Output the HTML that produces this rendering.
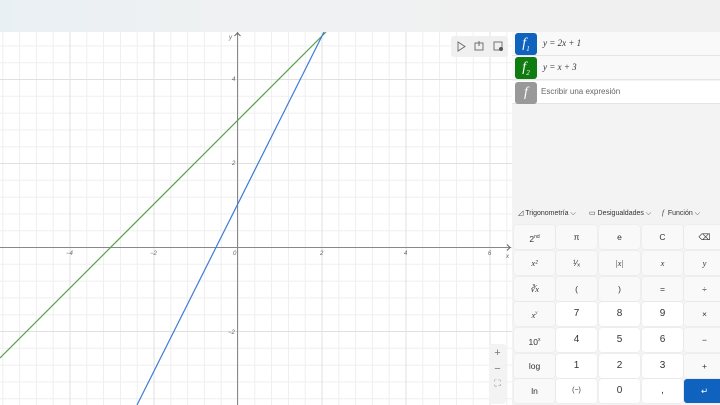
<!DOCTYPE html>
<html><head><meta charset="utf-8"><style>
*{margin:0;padding:0;box-sizing:border-box}
body{width:720px;height:405px;overflow:hidden;background:#f3f3f3;font-family:"Liberation Sans",sans-serif;position:relative}
.top{position:absolute;left:0;top:0;width:720px;height:32px;background:linear-gradient(90deg,#e9f0f4 0%,#eff1f2 30%,#f0f0f0 100%)}
svg.g{position:absolute;left:0;top:32px}
.panel{position:absolute;left:512px;top:32px;width:208px;height:373px;background:#f3f3f3}
.row{position:absolute;left:0;width:208px;height:24px;background:#f9f9f9;border-bottom:1px solid #e5e5e5}
.ic{position:absolute;left:3px;top:1px;width:22px;height:22px;border-radius:3px;color:#fff;font-family:"Liberation Serif",serif;font-style:italic;font-size:14px;text-align:center;line-height:22px}
.ic sub{font-size:7px}
.eq{position:absolute;left:31px;top:6px;font-family:"Liberation Serif",serif;font-style:italic;font-size:9px;color:#333}
.tb{position:absolute;top:209px;font-size:7px;color:#333}
.k{position:absolute;width:41px;height:24px;border-radius:3px;background:#f9f9f9;font-size:8.5px;color:#333;text-align:center;line-height:24px;box-shadow:0 0 0 .5px #e9e9e9}
.w{background:#fff;font-size:10px}
.ser{font-family:"Liberation Serif",serif;font-style:italic}
.zc{position:absolute;left:489px;top:344px;width:17px;height:60px;background:#f3f3f3;border-radius:3px;font-size:11px;color:#777;text-align:center}
.tools{position:absolute;left:451px;top:36px;width:57px;height:21px;background:#f0f0f0;border-radius:3px}
</style></head><body>
<div class="top"></div>
<svg class="g" width="512" height="373" viewBox="0 32 512 373">
<defs><pattern id="p" patternUnits="userSpaceOnUse" x="-14.5" y="-5" width="84" height="84">
<path d="M0.5 0V84M17.3 0V84M34.1 0V84M50.9 0V84M67.7 0V84M0 0.5H84M0 17.3H84M0 34.1H84M0 50.9H84M0 67.7H84" stroke="#efefef" stroke-width="1" fill="none"/>
<path d="M0.5 0V84M0 0.5H84" stroke="#e0e0e0" stroke-width="1" fill="none"/>
</pattern></defs>
<rect x="0" y="32" width="512" height="373" fill="#fff"/>
<rect x="0" y="32" width="512" height="373" fill="url(#p)"/>
<line x1="237.5" y1="32" x2="237.5" y2="405" stroke="#888" stroke-width="1"/>
<line x1="0" y1="247.5" x2="511" y2="247.5" stroke="#888" stroke-width="1"/>
<path d="M234.5 36 L237.5 33 L240.5 36 M507 244.5 L510 247.5 L507 250.5" stroke="#666" fill="none"/>
<g font-family="Liberation Sans" font-style="italic" font-size="6" fill="#666">
<text x="66" y="255">−4</text><text x="150" y="255">−2</text><text x="233" y="255">0</text><text x="320" y="255">2</text><text x="404" y="255">4</text><text x="488" y="255">6</text>
<text x="506" y="258">x</text><text x="229" y="39">y</text>
<text x="232" y="81">4</text><text x="232" y="165">2</text><text x="228" y="334">−2</text></g>
<line x1="0" y1="358" x2="326" y2="32" stroke="#5a9e4f" stroke-width="1.2"/>
<line x1="137" y1="405" x2="324" y2="32" stroke="#3b7dd8" stroke-width="1.2"/>
</svg>
<div class="tools"><svg width="57" height="21"><path d="M7 6L14 10.5 7 15Z" fill="none" stroke="#666" stroke-width=".9"/><rect x="24" y="7" width="8" height="7" fill="none" stroke="#666" stroke-width=".9"/><path d="M28 5v5" stroke="#666"/><rect x="43" y="6" width="8" height="8" fill="none" stroke="#666" stroke-width=".9"/><circle cx="50" cy="13" r="2" fill="#555"/></svg></div>
<div class="zc"><div style="margin-top:3px">+</div><div style="margin-top:4px">−</div><div style="margin-top:3px;font-size:9px">⛶</div></div>
<div class="panel">
<div class="row" style="top:0"><div class="ic" style="background:#0f63bf">f<sub>1</sub></div><div class="eq">y = 2x + 1</div></div>
<div class="row" style="top:24px"><div class="ic" style="background:#107c10">f<sub>2</sub></div><div class="eq">y = x + 3</div></div>
<div class="row" style="top:49px;background:#fff;height:23px"><div class="ic" style="background:#999">f</div><div class="eq" style="font-family:'Liberation Sans';font-style:normal;font-size:8px;color:#666;left:29px">Escribir una expresión</div></div>
</div>
<div class="tb" style="left:518px">◿ Trigonometría ⌵</div>
<div class="tb" style="left:589px">▭ Desigualdades ⌵</div>
<div class="tb" style="left:662px"><i style="font-family:'Liberation Serif'">f</i> &nbsp;Función ⌵</div>
<div class="k" style="left:514px;top:225px">2<sup style="font-size:5px">nd</sup></div><div class="k" style="left:556px;top:225px">π</div><div class="k" style="left:599px;top:225px">e</div><div class="k" style="left:642px;top:225px">C</div><div class="k" style="left:684px;top:225px">⌫</div>
<div class="k ser" style="left:514px;top:251px">x²</div><div class="k" style="left:556px;top:251px">¹⁄ₓ</div><div class="k ser" style="left:599px;top:251px">|x|</div><div class="k ser" style="left:642px;top:251px">x</div><div class="k ser" style="left:684px;top:251px">y</div>
<div class="k ser" style="left:514px;top:277px">∛x</div><div class="k" style="left:556px;top:277px">(</div><div class="k" style="left:599px;top:277px">)</div><div class="k" style="left:642px;top:277px">=</div><div class="k" style="left:684px;top:277px">÷</div>
<div class="k ser" style="left:514px;top:302px">x<sup style="font-size:5px">y</sup></div><div class="k w" style="left:556px;top:302px">7</div><div class="k w" style="left:599px;top:302px">8</div><div class="k w" style="left:642px;top:302px">9</div><div class="k" style="left:684px;top:302px">×</div>
<div class="k" style="left:514px;top:328px">10<sup style="font-size:5px">x</sup></div><div class="k w" style="left:556px;top:328px">4</div><div class="k w" style="left:599px;top:328px">5</div><div class="k w" style="left:642px;top:328px">6</div><div class="k" style="left:684px;top:328px">−</div>
<div class="k" style="left:514px;top:354px">log</div><div class="k w" style="left:556px;top:354px">1</div><div class="k w" style="left:599px;top:354px">2</div><div class="k w" style="left:642px;top:354px">3</div><div class="k" style="left:684px;top:354px">+</div>
<div class="k" style="left:514px;top:379px">ln</div><div class="k w" style="left:556px;top:379px;font-size:7px">(−)</div><div class="k w" style="left:599px;top:379px">0</div><div class="k w" style="left:642px;top:379px">,</div><div class="k" style="left:684px;top:379px;background:#0f63bf;color:#fff">↵</div>
</body></html>
